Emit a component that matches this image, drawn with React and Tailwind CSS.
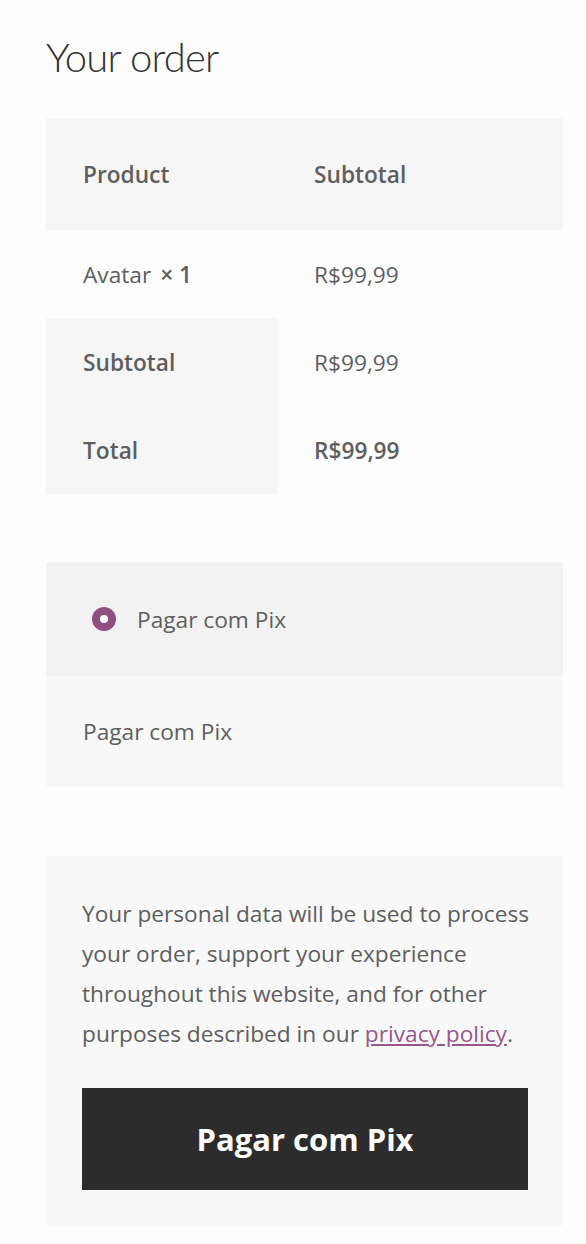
export default function App() {
  const font = { fontFamily: "'Open Sans', 'Liberation Sans', sans-serif" };
  const head = { fontFamily: "Lato, 'Open Sans', sans-serif" };
  return (
    <div className="min-h-[1244px] bg-[#fdfdfd] pl-[46px] pr-[23px] pt-[27px] text-[#5e5e5e]" style={font}>
      <h2 className="text-[40px] leading-[60px] font-light text-[#333333] tracking-[-0.8px]" style={head}>Your order</h2>

      <div className="mt-[31px] text-[22.7px]">
        <div className="flex h-[112px] items-center bg-[#f6f6f6] pt-[2px] font-semibold">
          <div className="w-[232px] pl-[37px]">Product</div>
          <div className="pl-[36px]">Subtotal</div>
        </div>
        <div className="flex h-[88px] items-center bg-[#fdfdfd] pt-[2px]">
          <div className="w-[232px] pl-[37px]">
            Avatar <strong className="ml-[3px] font-semibold">×&nbsp;1</strong>
          </div>
          <div className="pl-[36px]">R$99,99</div>
        </div>
        <div className="flex h-[88px]">
          <div className="flex w-[232px] items-center bg-[#f6f6f6] pl-[37px] pt-[2px] font-semibold">Subtotal</div>
          <div className="flex items-center pl-[36px] pt-[2px]">R$99,99</div>
        </div>
        <div className="flex h-[88px]">
          <div className="flex w-[232px] items-center bg-[#f6f6f6] pl-[37px] pt-[2px] font-semibold">Total</div>
          <div className="flex items-center pl-[36px] pt-[2px] font-semibold">R$99,99</div>
        </div>
      </div>

      <div className="mt-[68px] text-[22.7px]">
        <div className="flex h-[114px] items-center bg-[#f2f2f2] pl-[46px]">
          <span className="h-[24px] w-[24px] rounded-full border-[8px] border-[#8f4d80] bg-white"></span>
          <span className="ml-[21px] pt-[2px]">Pagar com Pix</span>
        </div>
        <div className="flex h-[111px] items-center bg-[#f8f8f8] pl-[37px] pt-[2px]">Pagar com Pix</div>
      </div>

      <div className="mt-[69px] bg-[#f8f8f8] pb-[36px] pl-[36px] pr-[35px] pt-[38px]">
        <p className="whitespace-nowrap text-[22.7px] leading-[40px]">
          Your personal data will be used to process<br />
          your order, support your experience<br />
          throughout this website, and for other<br />
          purposes described in our{" "}
          <a href="#" className="text-[#96588a] underline underline-offset-2">privacy policy</a>.
        </p>
        <button className="mt-[34px] flex h-[102px] w-full items-center justify-center bg-[#2c2c2c] text-[31px] font-bold text-white">
          Pagar com Pix
        </button>
      </div>
    </div>
  );
}
